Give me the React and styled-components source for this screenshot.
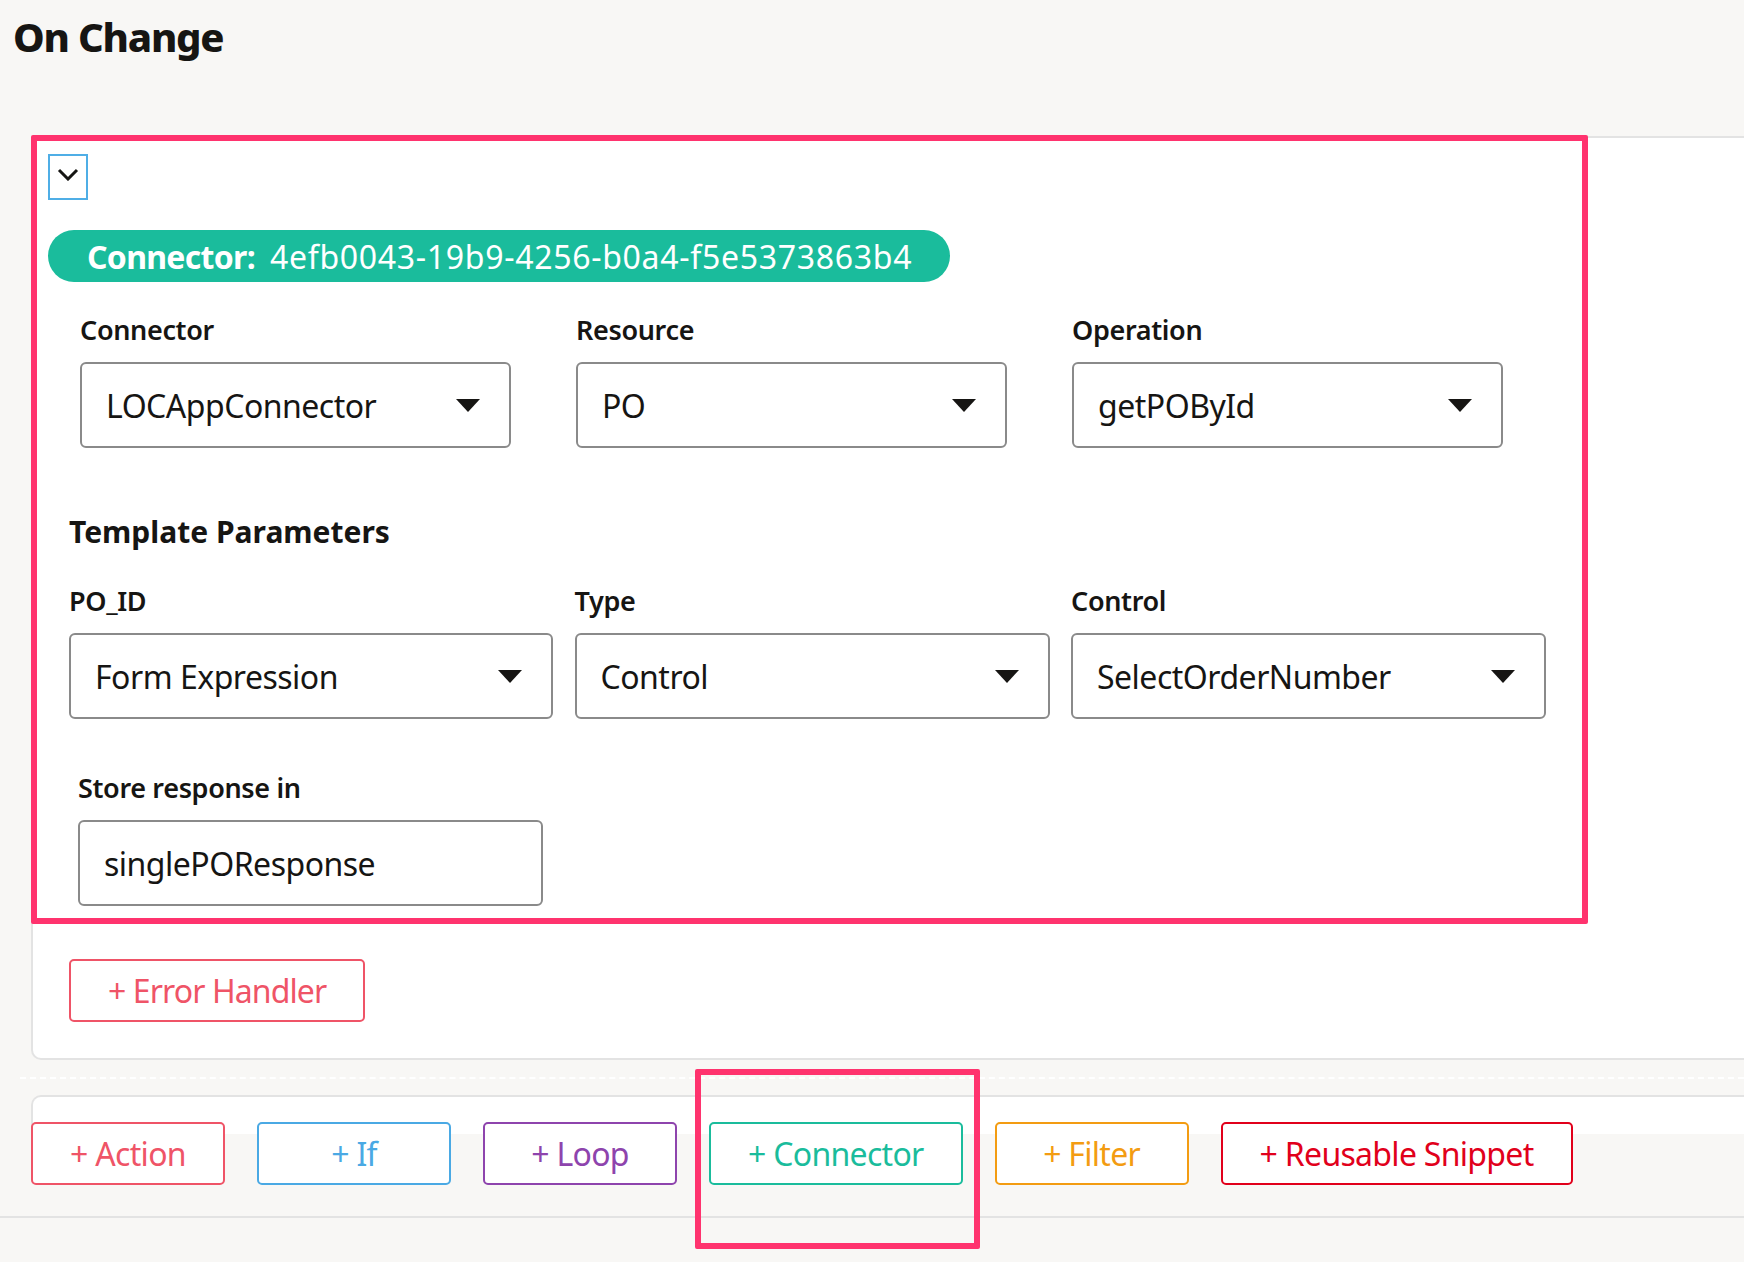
import styled, { createGlobalStyle } from "styled-components";

const GlobalStyle = createGlobalStyle`
  html, body {
    margin: 0;
    background: #f8f7f5;
  }
  body {
    font-family: "Noto Sans", "Open Sans", sans-serif;
    color: #161513;
  }
  * {
    box-sizing: border-box;
  }
`;

const Page = styled.div`
  padding-top: 12px;
  min-height: 1262px;
  overflow: hidden;
`;

const Title = styled.h1`
  margin: 0 0 0 13px;
  font-size: 40px;
  line-height: 50px;
  font-weight: 800;
  letter-spacing: -1.2px;
`;

const Card = styled.section`
  margin: 74px 0 0 31px;
  background: #fff;
  border: 2px solid #e3e3e3;
  border-right: none;
  border-radius: 0 0 0 10px;
  padding-bottom: 36px;
`;

const Highlight = styled.div`
  margin: -3px 0 0 -2px;
  width: 1557px;
  border: 6px solid #ff336e;
  border-radius: 2px;
  padding: 13px 0 12px;
`;

const Toggle = styled.button`
  display: flex;
  align-items: center;
  justify-content: center;
  width: 40px;
  height: 46px;
  margin-left: 11px;
  padding: 0 0 6px;
  background: #fff;
  border: 2px solid #4faee6;
  cursor: pointer;
`;

const Pill = styled.div`
  display: flex;
  align-items: center;
  gap: 15px;
  width: fit-content;
  height: 52px;
  margin: 30px 0 0 11px;
  padding: 0 38px 0 39px;
  border-radius: 26px;
  background: #1abc9c;
  color: #fff;
  font-size: 32px;
  white-space: nowrap;

  strong {
    font-weight: 700;
    letter-spacing: -0.7px;
  }
  span {
    letter-spacing: 0.7px;
  }
`;

const FieldGrid = styled.div`
  display: grid;
  grid-template-columns: ${(p) => p.$cols};
  column-gap: ${(p) => p.$gap || "0px"};
  margin-top: ${(p) => p.$top}px;
  padding-left: ${(p) => p.$indent}px;
`;

const Field = styled.div`
  display: flex;
  flex-direction: column;
  gap: 14px;
`;

const Label = styled.label`
  font-size: 27px;
  line-height: 36px;
  font-weight: 600;
  letter-spacing: -0.35px;
  white-space: nowrap;
`;

const Select = styled.div`
  display: flex;
  align-items: center;
  justify-content: space-between;
  height: 86px;
  padding: 0 29px 0 24px;
  border: 2px solid #8a8a8a;
  border-radius: 6px;
  background: #fff;
  font-size: 32px;
  letter-spacing: -0.5px;
  white-space: nowrap;
`;

const Caret = styled.span`
  width: 0;
  height: 0;
  border-left: 12px solid transparent;
  border-right: 12px solid transparent;
  border-top: 13px solid #161513;
`;

const SectionTitle = styled.h2`
  margin: 64px 0 0 32px;
  font-size: 30px;
  line-height: 40px;
  font-weight: 700;
`;

const AddButton = styled.button`
  height: 63px;
  min-width: 194px;
  padding: 0 37px;
  border: 2px solid ${(p) => p.$tone};
  border-radius: 5px;
  background: #fff;
  color: ${(p) => p.$tone};
  font-family: inherit;
  font-size: 32px;
  line-height: 1;
  letter-spacing: -0.7px;
  white-space: nowrap;
  cursor: pointer;
`;

const ErrorButton = styled(AddButton)`
  margin: 35px 0 0 36px;
  letter-spacing: -0.9px;
`;

const Divider = styled.div`
  margin: 17px 0 0 20px;
  border-top: 2px dashed #ffffff;
`;

const Tray = styled.div`
  position: relative;
  margin-top: 16px;
  padding: 27px 0 31px 31px;
  border-bottom: 2px solid #e3e3e3;

  &::before {
    content: "";
    position: absolute;
    top: 0;
    left: 31px;
    right: 0;
    height: 37px;
    background: #fff;
    border-top: 2px solid #e3e3e3;
    border-left: 2px solid #e3e3e3;
    border-top-left-radius: 10px;
  }
`;

const ButtonRow = styled.div`
  position: relative;
  display: flex;
  gap: 32px;
`;

const Callout = styled.span`
  position: relative;
  display: inline-flex;

  &::after {
    content: "";
    position: absolute;
    top: -53px;
    left: -14px;
    right: -17px;
    bottom: -64px;
    border: 6px solid #ff336e;
    border-radius: 2px;
    pointer-events: none;
  }
`;

const Chevron = () => (
  <svg width="22" height="13" viewBox="0 0 22 13">
    <polyline
      points="2,2 11,11 20,2"
      fill="none"
      stroke="#161513"
      strokeWidth="3"
    />
  </svg>
);

const SelectField = ({ label, value }) => (
  <Field>
    <Label>{label}</Label>
    <Select>
      <span>{value}</span>
      <Caret />
    </Select>
  </Field>
);

const tones = {
  action: "#ef5467",
  ifc: "#4aa9e4",
  loop: "#8e44ad",
  connector: "#1abc9c",
  filter: "#f39c12",
  snippet: "#e1001b",
};

export default function App() {
  return (
    <Page>
      <GlobalStyle />
      <Title>On Change</Title>

      <Card>
        <Highlight>
          <Toggle aria-label="Collapse">
            <Chevron />
          </Toggle>

          <Pill>
            <strong>Connector:</strong>
            <span>4efb0043-19b9-4256-b0a4-f5e5373863b4</span>
          </Pill>

          <FieldGrid $cols="repeat(3, 431px)" $gap="65px" $top={30} $indent={43}>
            <SelectField label="Connector" value="LOCAppConnector" />
            <SelectField label="Resource" value="PO" />
            <SelectField label="Operation" value="getPOById" />
          </FieldGrid>

          <SectionTitle>Template Parameters</SectionTitle>

          <FieldGrid $cols="484px 475px 475px" $gap="21.5px" $top={31} $indent={32}>
            <SelectField label="PO_ID" value="Form Expression" />
            <SelectField label="Type" value="Control" />
            <SelectField label="Control" value="SelectOrderNumber" />
          </FieldGrid>

          <FieldGrid $cols="465px" $top={51} $indent={41}>
            <Field>
              <Label>Store response in</Label>
              <Select>
                <span>singlePOResponse</span>
              </Select>
            </Field>
          </FieldGrid>
        </Highlight>

        <ErrorButton $tone={tones.action}>+ Error Handler</ErrorButton>
      </Card>

      <Divider />

      <Tray>
        <ButtonRow>
          <AddButton $tone={tones.action}>+ Action</AddButton>
          <AddButton $tone={tones.ifc}>+ If</AddButton>
          <AddButton $tone={tones.loop}>+ Loop</AddButton>
          <Callout>
            <AddButton $tone={tones.connector}>+ Connector</AddButton>
          </Callout>
          <AddButton $tone={tones.filter}>+ Filter</AddButton>
          <AddButton $tone={tones.snippet}>+ Reusable Snippet</AddButton>
        </ButtonRow>
      </Tray>
    </Page>
  );
}
